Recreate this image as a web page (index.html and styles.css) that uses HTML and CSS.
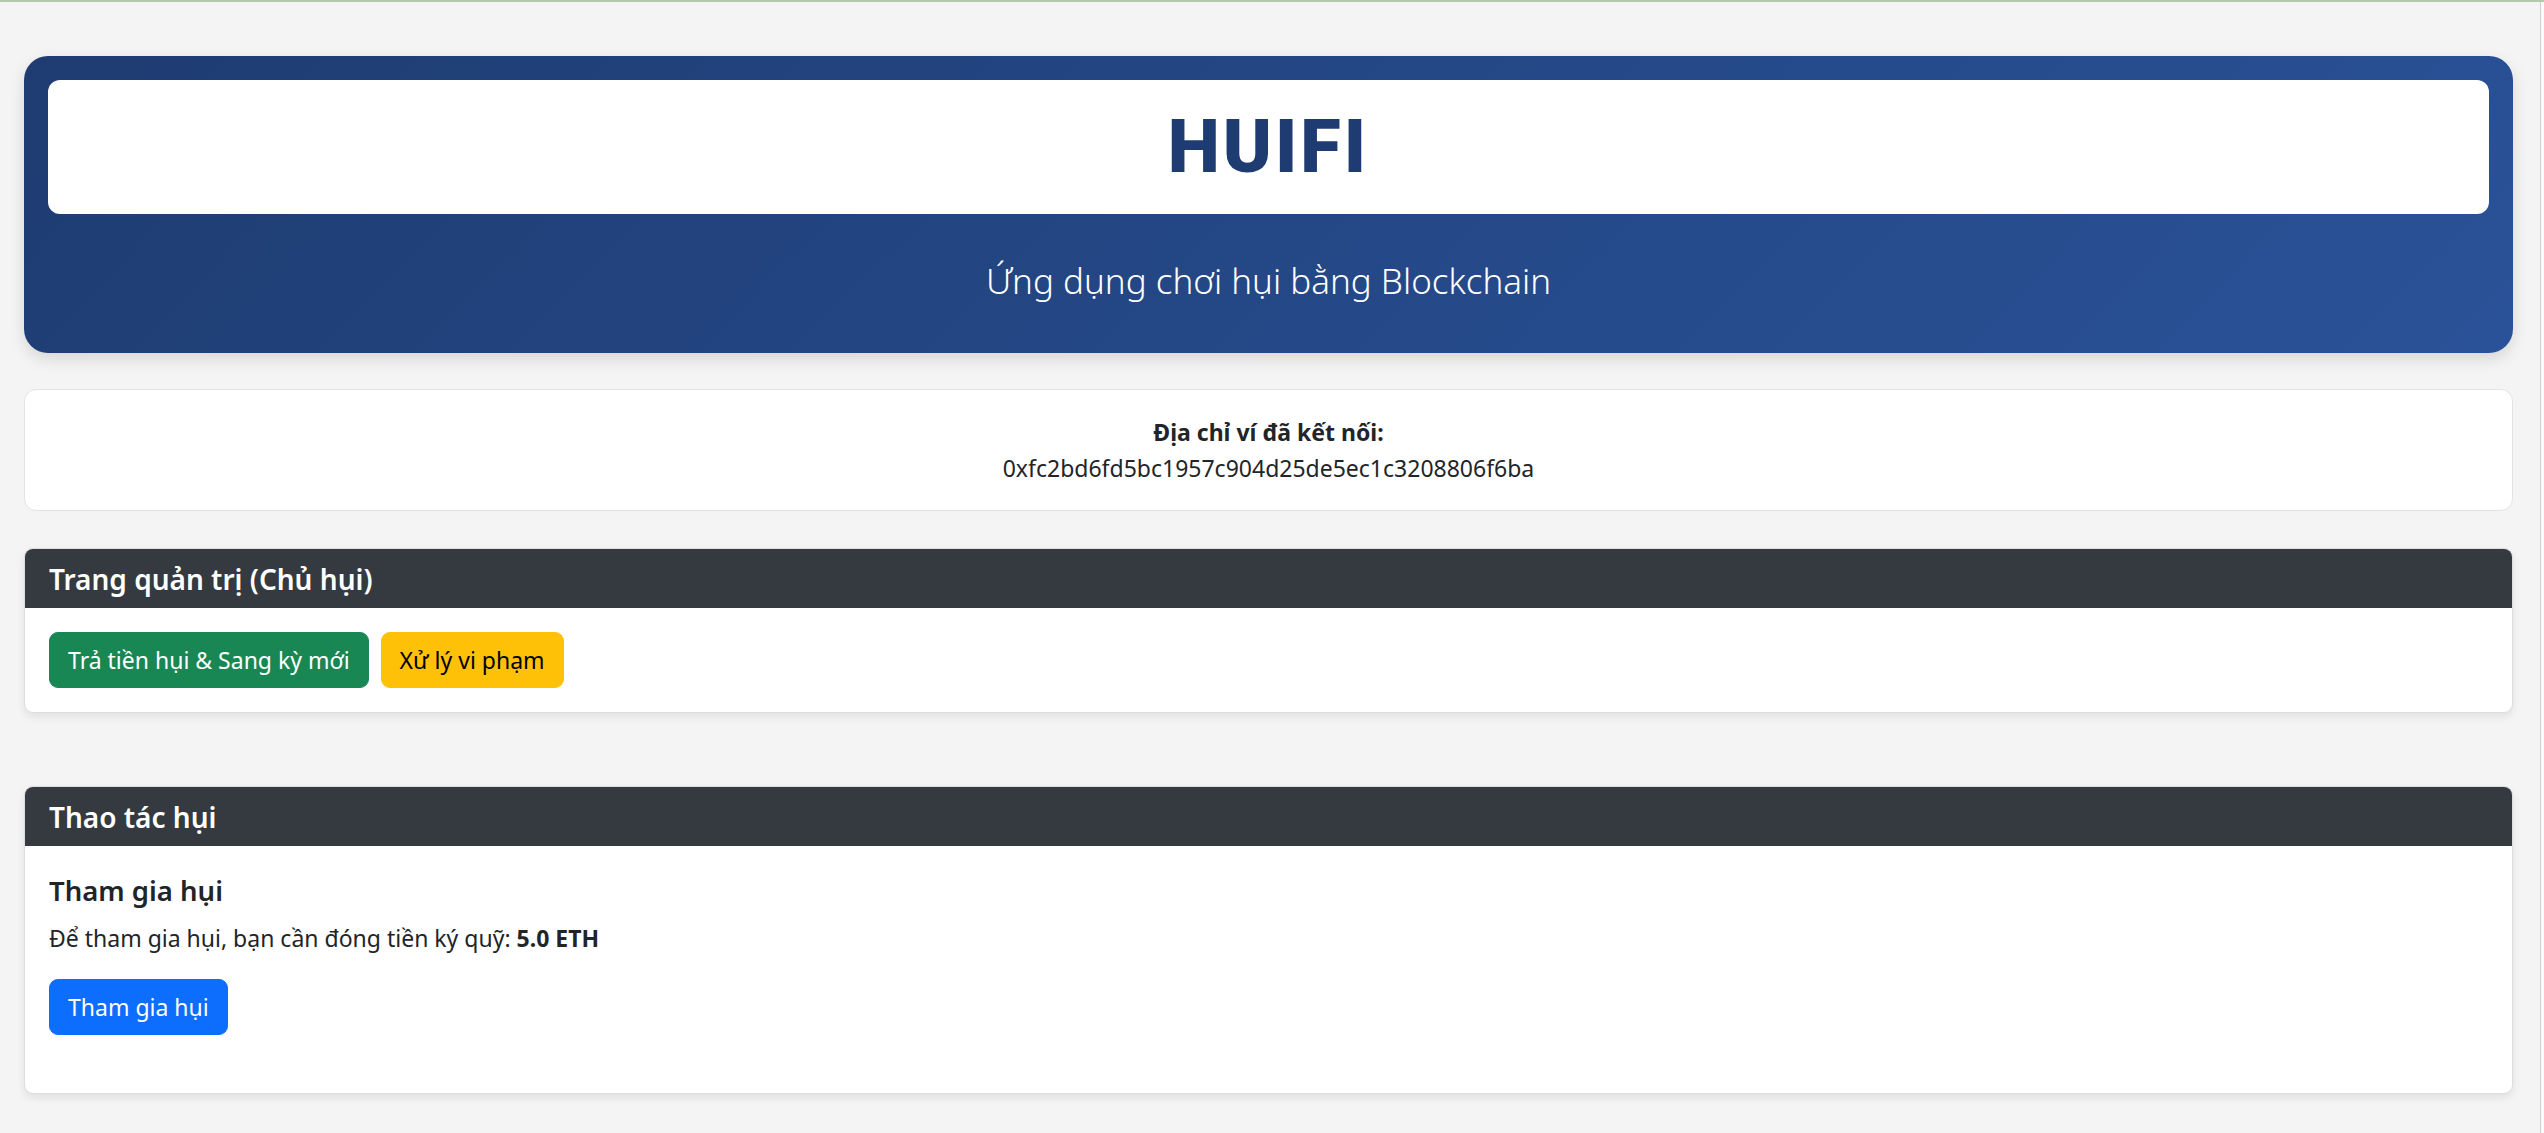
FILE: index.html
```html
<!DOCTYPE html>
<html lang="vi">
<head>
<meta charset="utf-8">
<title>HUIFI</title>
<link rel="stylesheet" href="styles.css">
</head>
<body>
<div class="topline"></div>
<div class="page">
  <main class="main">
    <header class="hero">
      <div class="brand-box"><h1 class="brand">HUIFI</h1></div>
      <p class="tagline">Ứng dụng chơi hụi bằng Blockchain</p>
    </header>

    <section class="wallet">
      <div class="wallet-label">Địa chỉ ví đã kết nối:</div>
      <div class="wallet-addr">0xfc2bd6fd5bc1957c904d25de5ec1c3208806f6ba</div>
    </section>

    <section class="card card-admin">
      <div class="card-header"><h5 class="card-title-h">Trang quản trị (Chủ hụi)</h5></div>
      <div class="card-body">
        <div class="btn-row">
          <button class="btn btn-success">Trả tiền hụi &amp; Sang kỳ mới</button>
          <button class="btn btn-warning">Xử lý vi phạm</button>
        </div>
      </div>
    </section>

    <section class="card card-actions">
      <div class="card-header"><h5 class="card-title-h">Thao tác hụi</h5></div>
      <div class="card-body">
        <h5 class="section-title">Tham gia hụi</h5>
        <p class="section-text">Để tham gia hụi, bạn cần đóng tiền ký quỹ: <strong>5.0 ETH</strong></p>
        <div class="join-wrap">
          <button class="btn btn-primary">Tham gia hụi</button>
        </div>
      </div>
    </section>
  </main>
  <div class="scroll-strip"></div>
</div>
</body>
</html>
```

FILE: styles.css
```css
* { box-sizing: border-box; }

html, body {
  margin: 0;
  padding: 0;
}

body {
  background: #f4f4f5;
  color: #212529;
  font-family: "Noto Sans", "Open Sans", "Liberation Sans", sans-serif;
  font-size: 23px;
  line-height: 36px;
  min-height: 1133px;
}

.topline {
  height: 2px;
  background: #b7c9ad;
}

.page {
  display: flex;
  align-items: stretch;
  min-height: 1131px;
}

.main {
  flex: 1;
  padding: 54px 27px 40px 24px;
}

.scroll-strip {
  width: 4px;
  border-left: 1px solid #cfcfcf;
  background: #fbfbfb;
}

/* Hero */
.hero {
  background: linear-gradient(135deg, #1e3c72 0%, #2a5298 100%);
  border-radius: 24px;
  padding: 24px;
  box-shadow: 0 6px 16px rgba(0, 0, 0, 0.12);
  text-align: center;
}

.brand-box {
  background: #ffffff;
  border-radius: 12px;
  padding: 24px 0;
}

.brand {
  margin: 0;
  font-family: "Roboto", "Noto Sans", sans-serif;
  font-weight: 900;
  font-size: 74px;
  line-height: 86px;
  letter-spacing: 3px;
  color: #1e3c72;
}

.tagline {
  margin: 44px 0 26px;
  color: #ffffff;
  font-size: 35px;
  font-weight: 300;
  line-height: 45px;
}

/* Wallet */
.wallet {
  margin-top: 36px;
  background: #ffffff;
  border: 1px solid #e2e3e5;
  border-radius: 12px;
  padding: 24px;
  text-align: center;
}

.wallet-label {
  font-weight: 700;
}

/* Cards */
.card {
  background: #ffffff;
  border: 1px solid #dcdde0;
  border-radius: 9px;
  overflow: hidden;
  box-shadow: 0 4px 8px rgba(0, 0, 0, 0.08);
}

.card-admin { margin-top: 37px; }
.card-actions { margin-top: 73px; }

.card-header {
  background: #343a40;
  color: #ffffff;
  padding: 12px 24px 11px;
}

.card-title-h {
  margin: 0;
  font-size: 28px;
  font-weight: 600;
  line-height: 36px;
}

.card-body {
  padding: 24px;
}

.btn-row {
  display: flex;
  gap: 12px;
}

.btn {
  font-family: inherit;
  font-size: 23px;
  line-height: 36px;
  padding: 9px 18px;
  border: 1px solid transparent;
  border-radius: 9px;
  cursor: pointer;
}

.btn-success {
  background: #198754;
  border-color: #198754;
  color: #ffffff;
}

.btn-warning {
  background: #ffc107;
  border-color: #ffc107;
  color: #000000;
}

.btn-primary {
  background: #0d6efd;
  border-color: #0d6efd;
  color: #ffffff;
}

.section-title {
  margin: 3px 0 11px;
  font-size: 27.5px;
  font-weight: 600;
  line-height: 36px;
}

.section-text {
  margin: 0 0 23px;
}

.section-text strong {
  font-weight: 700;
}

.join-wrap {
  margin-bottom: 34px;
}
```
